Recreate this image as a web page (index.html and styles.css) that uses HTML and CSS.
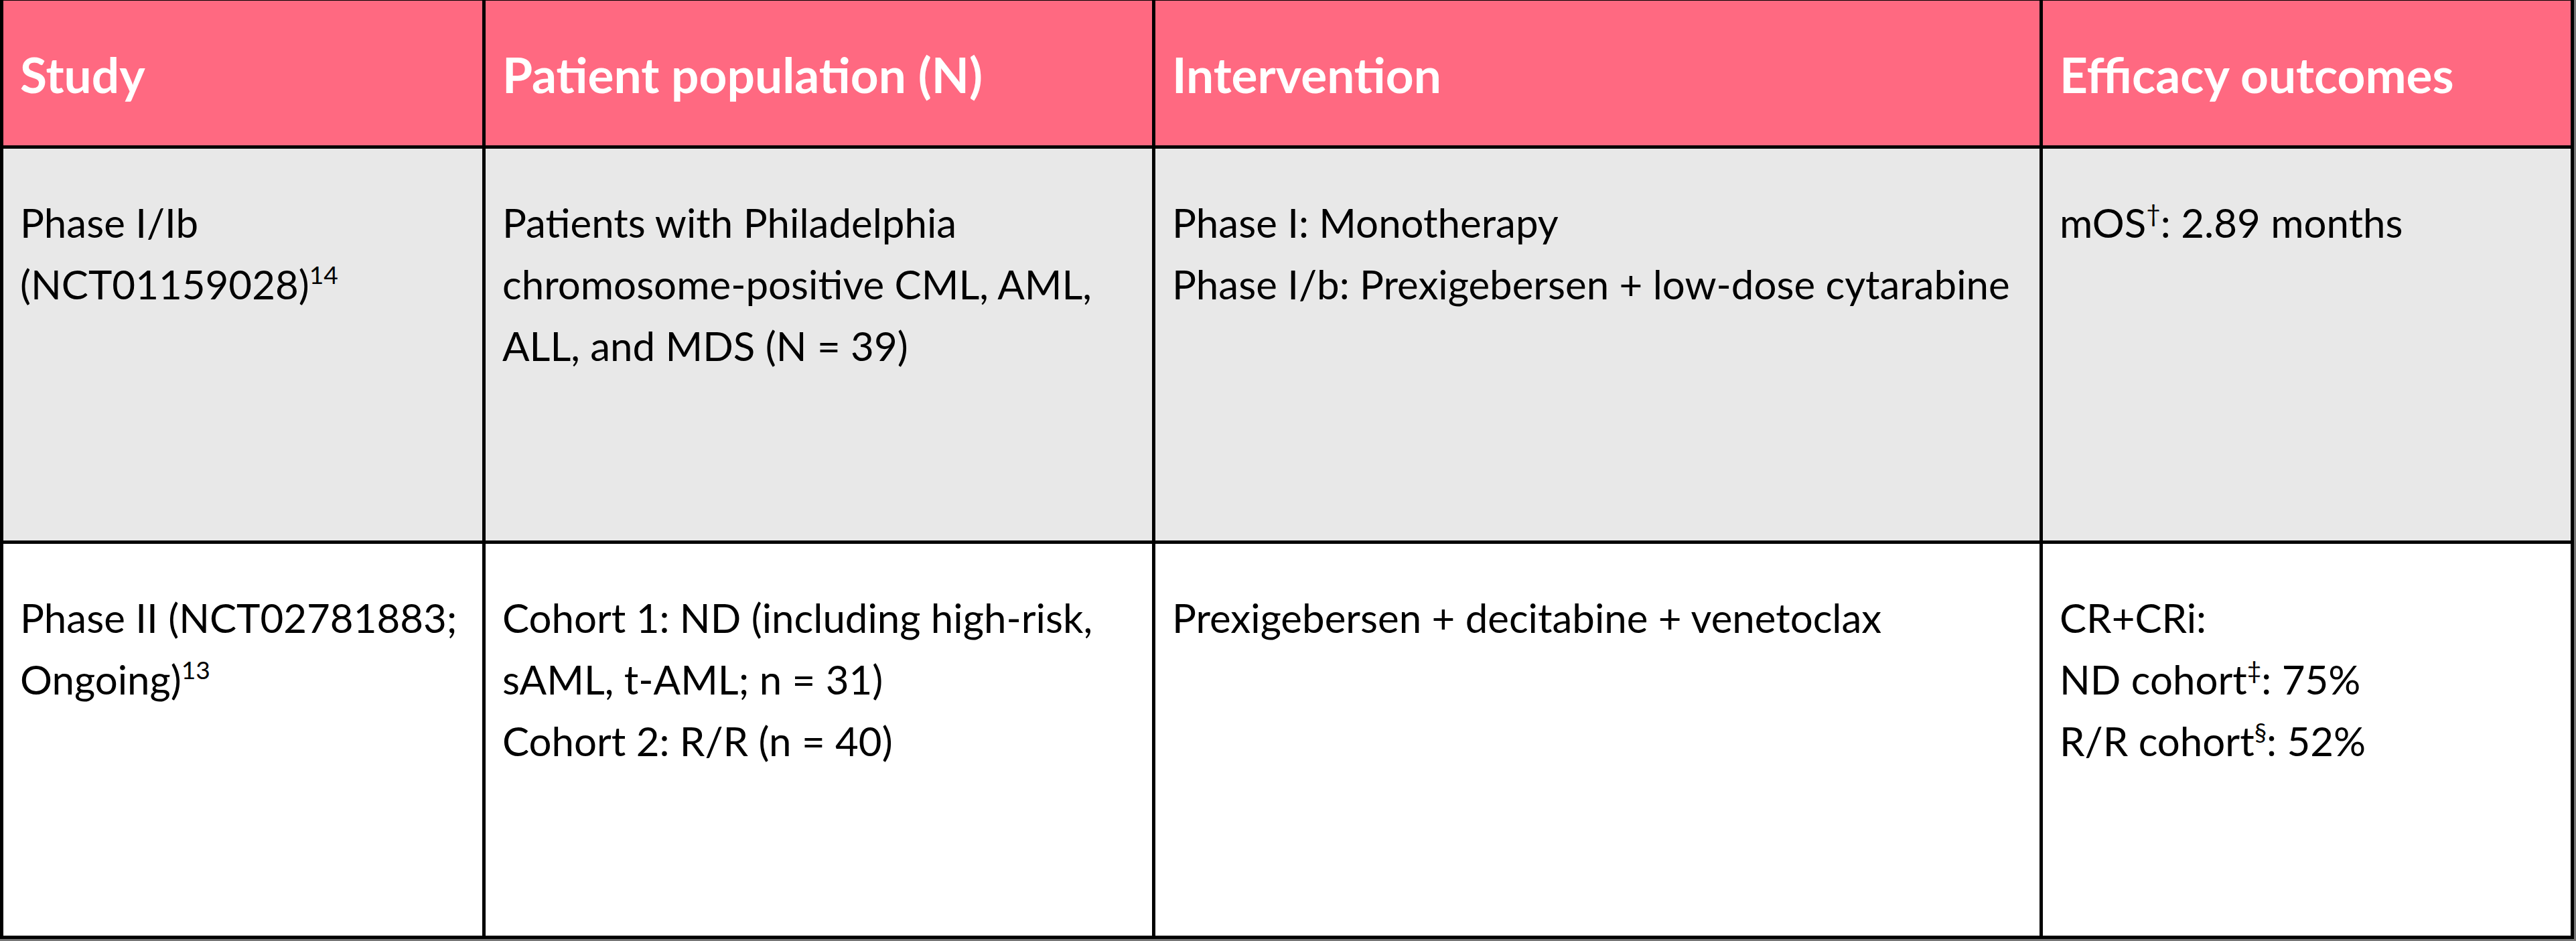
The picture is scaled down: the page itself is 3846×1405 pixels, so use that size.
FILE: index.html
```html
<!DOCTYPE html>
<html lang="en">
<head>
<meta charset="utf-8">
<title>Prexigebersen studies</title>
<link rel="stylesheet" href="styles.css">
</head>
<body>
<table class="studies">
  <colgroup>
    <col class="c-study">
    <col class="c-pop">
    <col class="c-int">
    <col class="c-eff">
  </colgroup>
  <thead>
    <tr class="head-row">
      <th>Study</th>
      <th>Patient population (N)</th>
      <th>Intervention</th>
      <th>Efficacy outcomes</th>
    </tr>
  </thead>
  <tbody>
    <tr class="row-grey">
      <td>Phase I/Ib<br>(NCT01159028)<sup>14</sup></td>
      <td>Patients with Philadelphia<br>chromosome-positive CML, AML,<br>ALL, and MDS (N = 39)</td>
      <td><div>Phase I: Monotherapy</div><div>Phase I/b: Prexigebersen + low-dose cytarabine</div></td>
      <td>mOS<sup>†</sup>: 2.89 months</td>
    </tr>
    <tr class="row-white">
      <td>Phase II (NCT02781883;<br>Ongoing)<sup>13</sup></td>
      <td><div>Cohort 1: ND (including high-risk,<br>sAML, t-AML; n = 31)</div><div>Cohort 2: R/R (n = 40)</div></td>
      <td>Prexigebersen + decitabine + venetoclax</td>
      <td><div>CR+CRi:</div><div>ND cohort<sup>‡</sup>: 75%</div><div>R/R cohort<sup>§</sup>: 52%</div></td>
    </tr>
  </tbody>
</table>
</body>
</html>
```

FILE: styles.css
```css
html, body {
  margin: 0;
  padding: 0;
  background: #767676;
}

body {
  font-family: Lato, "Liberation Sans", sans-serif;
  overflow: hidden;
}

.studies {
  margin-top: -4px;
  border-collapse: collapse;
  table-layout: fixed;
  width: 3843px;
  border: 5px solid #000;
}

.c-study { width: 720px; }
.c-pop { width: 1000px; }
.c-int { width: 1325px; }
.c-eff { width: 793px; }

.studies th,
.studies td {
  border: 5px solid #000;
  text-align: left;
  vertical-align: top;
  padding: 0 20px 0 25px;
  white-space: nowrap;
}

.head-row {
  height: 221px;
}

.head-row th {
  background: #ff6981;
  color: #fff;
  font-weight: 700;
  font-size: 73px;
  line-height: 92px;
  padding-top: 64px;
}

.row-grey td,
.row-white td {
  font-size: 60px;
  line-height: 92px;
  color: #000;
  padding-top: 64px;
}

.row-grey {
  height: 590px;
}

.row-white {
  height: 590px;
}

.row-grey td {
  background: #e8e8e8;
}

.row-white td {
  background: #fff;
}

.studies sup {
  font-size: 0.62em;
  line-height: 0;
  vertical-align: 0.62em;
}
```
